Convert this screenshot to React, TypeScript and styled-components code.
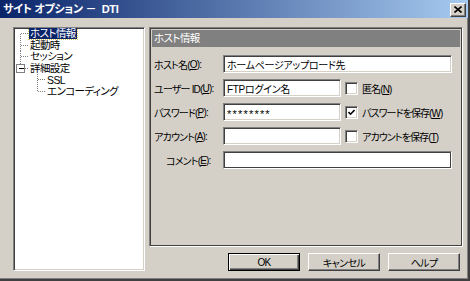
import React from 'react'
import styled, { createGlobalStyle } from 'styled-components'

const GlobalStyle = createGlobalStyle`
  html, body {
    margin: 0;
    padding: 0;
    background: #d4d0c8;
  }
  body {
    font-family: "Liberation Sans", "Noto Sans CJK JP", sans-serif;
    font-size: 10px;
    letter-spacing: -0.6px;
    font-feature-settings: "palt" 1;
  }
`

const Window = styled.div`
  width: 470px;
  height: 281px;
  box-sizing: border-box;
  background: #d4d0c8;
  border-right: 2px solid #404040;
  border-bottom: 2px solid #404040;
  box-shadow: inset -1px -1px #808080;
  display: flex;
  flex-direction: column;
`
const TitleBar = styled.div`
  height: 18px;
  flex: none;
  background: linear-gradient(to right, #0a246a, #a6caf0);
  display: flex;
  align-items: center;
  justify-content: space-between;
  padding: 0 2px 0 3px;
`
const TitleText = styled.div`
  color: #fff;
  font-weight: bold;
  font-size: 11px;
  letter-spacing: -0.3px;
  white-space: pre;
  line-height: 18px;
`
const CloseButton = styled.div`
  width: 16px;
  height: 14px;
  box-sizing: border-box;
  background: #d4d0c8;
  border: 1px solid;
  border-color: #fff #404040 #404040 #fff;
  box-shadow: inset -1px -1px #808080;
  display: flex;
  align-items: center;
  justify-content: center;
  margin-top: 1px;
`
const Body = styled.div`
  flex: 1;
  min-height: 0;
  display: flex;
  gap: 4px;
  padding: 9px 5px 8px 13px;
`
const TreeBox = styled.div`
  flex: none;
  width: 132px;
  box-sizing: border-box;
  background: #fff;
  border: 1px solid;
  border-color: #808080 #fff #fff #808080;
  box-shadow: inset 1px 1px #404040, inset -1px -1px #d4d0c8;
  padding: 0 0 0 2px;
  overflow: hidden;
`
const TreeList = styled.div`
  margin-top: 0;
`
const TreeRow = styled.div`
  height: 11.6px;
  display: flex;
  align-items: center;
  white-space: nowrap;
`
const TreeLabel = styled.span<{ $selected?: boolean }>`
  font-size: 10.5px;
  line-height: 11px;
  padding: 0 1px;
  color: ${(p) => (p.$selected ? '#fff' : '#000')};
  background: ${(p) => (p.$selected ? '#0a246a' : 'transparent')};
  outline: ${(p) => (p.$selected ? '1px dotted #d8c860' : 'none')};
`
const RightColumn = styled.div`
  flex: 1;
  min-width: 0;
  display: flex;
  flex-direction: column;
  gap: 6px;
`
const Panel = styled.div`
  height: 220px;
  box-sizing: border-box;
  border: 1px solid;
  border-color: #808080 #fff #fff #808080;
  box-shadow: inset 0 0 0 1px #404040;
  padding: 1px;
  display: flex;
  flex-direction: column;
`
const PanelHeader = styled.div`
  height: 17px;
  background: #808080;
  color: #fff;
  font-size: 10.5px;
  line-height: 17px;
  padding-left: 2px;
  margin: 1px 1px 0;
`
const Form = styled.div`
  display: grid;
  grid-template-columns: 69px 118px 1fr;
  grid-auto-rows: 18px;
  row-gap: 6px;
  padding: 8px 9px 0 3px;
`
const Label = styled.div<{ $indent?: number }>`
  display: flex;
  align-items: center;
  padding-left: ${(p) => p.$indent ?? 0}px;
  white-space: nowrap;
  letter-spacing: -0.8px;
`
const TextBox = styled.div<{ $wide?: boolean; $framed?: boolean }>`
  grid-column: ${(p) => (p.$wide ? '2 / 4' : 'auto')};
  box-sizing: border-box;
  height: 18px;
  background: #fff;
  border: 1px solid;
  border-color: #808080 #fff #fff #808080;
  box-shadow: ${(p) =>
    p.$framed
      ? 'inset 0 0 0 1px #404040'
      : 'inset 1px 1px #404040, inset -1px -1px #d4d0c8'};
  padding: 0 3px;
  display: flex;
  align-items: center;
  white-space: nowrap;
  overflow: hidden;
  letter-spacing: -0.3px;
`
const Secret = styled.span`
  font-size: 11px;
  letter-spacing: 1.2px;
  padding-top: 3px;
`
const CheckField = styled.div`
  display: flex;
  align-items: center;
  gap: 4px;
  padding-left: 4px;
  white-space: nowrap;
  letter-spacing: -0.9px;
`
const CheckBox = styled.div`
  width: 13px;
  height: 13px;
  flex: none;
  box-sizing: border-box;
  background: #fff;
  border: 1px solid;
  border-color: #808080 #fff #fff #808080;
  box-shadow: inset 1px 1px #404040, inset -1px -1px #d4d0c8;
  display: flex;
  align-items: center;
  justify-content: center;
`
const ButtonRow = styled.div`
  display: flex;
  justify-content: flex-end;
  gap: 8px;
  padding-right: 3px;
`
const Button = styled.div<{ $default?: boolean }>`
  width: 72px;
  height: 18px;
  box-sizing: border-box;
  background: #d4d0c8;
  border: 1px solid;
  border-color: ${(p) => (p.$default ? '#000' : '#fff #404040 #404040 #fff')};
  box-shadow: ${(p) =>
    p.$default
      ? 'inset 1px 1px #fff, inset -1px -1px #404040, inset -2px -2px #808080'
      : 'inset -1px -1px #808080'};
  display: flex;
  align-items: center;
  justify-content: center;
`

type TreeItem = {
  label: string
  level: 0 | 1
  pos: 'first' | 'mid' | 'last'
  box?: boolean
  selected?: boolean
}

const treeItems: TreeItem[] = [
  { label: 'ホスト情報', level: 0, pos: 'first', selected: true },
  { label: '起動時', level: 0, pos: 'mid' },
  { label: 'セッション', level: 0, pos: 'mid' },
  { label: '詳細設定', level: 0, pos: 'last', box: true },
  { label: 'SSL', level: 1, pos: 'mid' },
  { label: 'エンコーディング', level: 1, pos: 'last' },
]

const TreeGlyph = ({ level, pos, box }: TreeItem) => {
  const w = level === 0 ? 13 : 30
  const h = 11.6
  const cy = 5.5
  const x = level === 0 ? 4.5 : 21.5
  const y1 = pos === 'first' ? cy : 0
  const y2 = pos === 'last' ? cy : h
  return (
    <svg width={w} height={h} style={{ flex: 'none' }} shapeRendering="crispEdges">
      <line x1={x} y1={y1} x2={x} y2={y2} stroke="#808080" strokeDasharray="1 1" />
      <line x1={x} y1={cy} x2={x + 7} y2={cy} stroke="#808080" strokeDasharray="1 1" />
      {box && (
        <>
          <rect x={x - 4} y={cy - 4} width={8} height={8} fill="#fff" stroke="#808080" />
          <line x1={x - 2} y1={cy} x2={x + 3} y2={cy} stroke="#000" />
        </>
      )}
    </svg>
  )
}

const M = ({ k }: { k: string }) => (
  <>
    (<u>{k}</u>)
  </>
)

export default function App() {
  return (
    <>
      <GlobalStyle />
      <Window>
        <TitleBar>
          <TitleText>{'サイト オプション －  DTI'}</TitleText>
          <CloseButton>
            <svg width="8" height="7" viewBox="0 0 8 7">
              <path d="M0.5 0.5 L7.5 6.5 M7.5 0.5 L0.5 6.5" stroke="#000" strokeWidth="1.6" />
            </svg>
          </CloseButton>
        </TitleBar>
        <Body>
          <TreeBox>
            <TreeList>
              {treeItems.map((it) => (
                <TreeRow key={it.label}>
                  <TreeGlyph {...it} />
                  <TreeLabel $selected={it.selected}>{it.label}</TreeLabel>
                </TreeRow>
              ))}
            </TreeList>
          </TreeBox>
          <RightColumn>
            <Panel>
              <PanelHeader>ホスト情報</PanelHeader>
              <Form>
                <Label>
                  ホスト名<M k="O" />:
                </Label>
                <TextBox $wide>ホームページアップロード先</TextBox>

                <Label>
                  ユーザー ID<M k="U" />:
                </Label>
                <TextBox>FTPログイン名</TextBox>
                <CheckField>
                  <CheckBox />
                  <span>
                    匿名<M k="N" />
                  </span>
                </CheckField>

                <Label>
                  パスワード<M k="P" />:
                </Label>
                <TextBox>
                  <Secret>********</Secret>
                </TextBox>
                <CheckField>
                  <CheckBox>
                    <svg width="7" height="7" viewBox="0 0 7 7">
                      <path d="M0.5 3 L2.5 5.2 L6.5 1" stroke="#000" strokeWidth="1.6" fill="none" />
                    </svg>
                  </CheckBox>
                  <span>
                    パスワードを保存<M k="W" />
                  </span>
                </CheckField>

                <Label>
                  アカウント<M k="A" />:
                </Label>
                <TextBox />
                <CheckField>
                  <CheckBox />
                  <span>
                    アカウントを保存<M k="T" />
                  </span>
                </CheckField>

                <Label $indent={12}>
                  コメント<M k="E" />:
                </Label>
                <TextBox $wide $framed />
              </Form>
            </Panel>
            <ButtonRow>
              <Button $default>OK</Button>
              <Button>キャンセル</Button>
              <Button>ヘルプ</Button>
            </ButtonRow>
          </RightColumn>
        </Body>
      </Window>
    </>
  )
}
